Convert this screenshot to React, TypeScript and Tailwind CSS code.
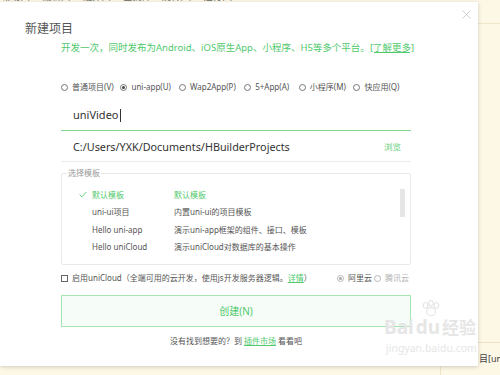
import React from "react";

const FONT = { fontFamily: '"Noto Sans", "Noto Sans CJK SC", sans-serif' };

function Radio({ checked, light }: { checked?: boolean; light?: boolean }) {
  return (
    <span
      className={`flex h-[7px] w-[7px] shrink-0 items-center justify-center rounded-full border ${
        light ? "border-[#b8b8b8]" : "border-[#777]"
      } bg-white`}
    >
      {checked && <span className={`h-[3px] w-[3px] rounded-full ${light ? "bg-[#aaa]" : "bg-[#444]"}`} />}
    </span>
  );
}

const radios = [
  { label: "普通项目(V)", w: "w-[62px]" },
  { label: "uni-app(U)", w: "w-[61px]", checked: true },
  { label: "Wap2App(P)", w: "w-[68px]" },
  { label: "5+App(A)", w: "w-[57px]" },
  { label: "小程序(M)", w: "w-[57px]" },
  { label: "快应用(Q)", w: "w-[60px]" },
];

const templates = [
  { name: "默认模板", desc: "默认模板", active: true },
  { name: "uni-ui项目", desc: "内置uni-ui的项目模板" },
  { name: "Hello uni-app", desc: "演示uni-app框架的组件、接口、模板" },
  { name: "Hello uniCloud", desc: "演示uniCloud对数据库的基本操作" },
];

export default function App() {
  return (
    <div className="relative h-[375px] w-[500px] overflow-hidden bg-[#fdf7e6]" style={FONT}>
      {/* underlying editor */}
      <div className="flex h-full w-full flex-col">
        <div className="h-[24px] border-b border-[#efe6cc]">
          <div className="mt-[-8px] flex gap-[12px] pl-[2px] text-[9px] leading-[10px] text-[#666]">
            <span>帮助(Y)</span>
            <span>编辑(E)</span>
            <span>选择(S)</span>
            <span>查找(I)</span>
            <span>跳转(G)</span>
            <span>运行(R)</span>
            <span className="ml-[50px]">HBuilder X 3.0.0</span>
          </div>
        </div>
        <div className="flex-1" />
        <div className="ml-auto flex h-[33px] w-[60px] border-l border-t border-[#eee3c6] bg-[#fdf7e6]">
          <span className="ml-[38px] mt-[10px] whitespace-nowrap text-[9px] leading-[12px] text-[#444]">目[uni</span>
        </div>
      </div>

      {/* dialog */}
      <div className="absolute left-0 top-[2px] h-[364px] w-[478px] bg-white shadow-[0_1px_4px_rgba(0,0,0,0.18)]">
        {/* close */}
        <svg className="absolute left-[462px] top-[8px]" width="9" height="9" viewBox="0 0 9 9">
          <path d="M0.5 0.5 L8.5 8.5 M8.5 0.5 L0.5 8.5" stroke="#c8c8c8" strokeWidth="0.9" />
        </svg>

        <div className="pt-[20px]">
          <div className="pl-[25px] text-[12px] leading-[14px] text-[#555]">新建项目</div>
          <div className="mt-[6px] pl-[61px] text-[9.5px] leading-[12px] text-[#4fc96c] whitespace-nowrap">
            开发一次，同时发布为Android、iOS原生App、小程序、H5等多个平台。
            <span className="underline">[了解更多]</span>
          </div>

          <div className="ml-[61px] w-[350px]">
            {/* radios */}
            <div className="mt-[27px] flex h-[12px] items-center text-[8px] text-[#555]">
              {radios.map((r) => (
                <div key={r.label} className={`flex items-center gap-[4px] ${r.w}`}>
                  <Radio checked={r.checked} />
                  <span className="whitespace-nowrap leading-[12px]">{r.label}</span>
                </div>
              ))}
            </div>

            {/* name input */}
            <div className="mt-[7px] flex h-[31px] items-center border-b border-[#7fd891] pl-[12px] text-[11px] text-[#333]">
              <span>uniVideo</span>
              <span className="ml-[1px] h-[13px] w-[1px] bg-[#333]" />
            </div>

            {/* path */}
            <div className="flex h-[31px] items-center border-b border-[#ececec] pl-[12px] pr-[10px] pt-[2px]">
              <span className="text-[10.8px] text-[#333]">C:/Users/YXK/Documents/HBuilderProjects</span>
              <span className="ml-auto text-[8.5px] text-[#5fcf78]">浏览</span>
            </div>

            {/* templates */}
            <fieldset className="relative mt-[6px] h-[97px] rounded-[2px] border border-[#e9e9e9] px-0 pb-0">
              <legend className="ml-[5px] px-[1px] text-[8px] leading-[10px] text-[#9a9a9a]">选择模板</legend>
              <div className="pt-[8px]">
                {templates.map((t) => (
                  <div
                    key={t.name}
                    className={`flex h-[17.5px] items-center text-[8px] ${t.active ? "text-[#4fc96c]" : "text-[#555]"}`}
                  >
                    <span className="w-[30px] pl-[17px]">
                      {t.active && (
                        <svg width="8" height="7" viewBox="0 0 8 7">
                          <path d="M0.6 3.6 L2.9 5.8 L7.4 0.9" fill="none" stroke="#4fc96c" strokeWidth="0.9" />
                        </svg>
                      )}
                    </span>
                    <span className="w-[82px] whitespace-nowrap">{t.name}</span>
                    <span className="whitespace-nowrap">{t.desc}</span>
                  </div>
                ))}
              </div>
              <div className="absolute left-[338px] top-[11px] h-[28px] w-[5px] bg-[#e6e6e6]" />
            </fieldset>

            {/* uniCloud */}
            <div className="mt-[7px] flex h-[12px] items-center text-[8px] text-[#555]">
              <span className="h-[7px] w-[7px] border border-[#666] bg-white" />
              <span className="ml-[4px] whitespace-nowrap">
                启用uniCloud（全端可用的云开发，使用js开发服务器逻辑。
                <span className="text-[#4fc96c] underline">详情</span>）
              </span>
              <div className="ml-auto mr-[2px] flex items-center">
                <Radio checked light />
                <span className="ml-[4px] text-[#555]">阿里云</span>
                <span className="ml-[2px]">
                  <Radio light />
                </span>
                <span className="ml-[4px] text-[#b5b5b5]">腾讯云</span>
              </div>
            </div>

            {/* create button */}
            <div className="mt-[11px] flex h-[32px] items-center justify-center border border-[#a7e4b3] bg-[#f6fcf7] text-[10px] text-[#4fc96c]">
              创建(N)
            </div>

            {/* bottom */}
            <div className="mt-[9px] flex h-[10px] items-center justify-center text-[8px] text-[#555]">
              <span>没有找到想要的？到 </span>
              <span className="mx-[2px] text-[#4fc96c] underline">插件市场</span>
              <span>看看吧</span>
            </div>
          </div>
        </div>
      </div>

      {/* watermark */}
      <div className="pointer-events-none absolute left-[384px] top-[300px] flex flex-col items-start text-[#e6e6e6]">
        <svg className="ml-[36px]" width="22" height="18" viewBox="0 0 24 20">
          <g fill="none" stroke="#e4e4e4" strokeWidth="1.2">
            <ellipse cx="6" cy="6" rx="2.5" ry="3.2" />
            <ellipse cx="12" cy="3.5" rx="2.5" ry="3" />
            <ellipse cx="18" cy="6" rx="2.5" ry="3.2" />
            <ellipse cx="12" cy="13" rx="5" ry="4.5" />
          </g>
        </svg>
        <div className="-mt-[2px] flex items-baseline gap-[2px] text-[19px] font-bold leading-[22px]">
          <span>Bai</span>
          <span>du</span>
          <span className="text-[17px]" style={{ fontFamily: '"Noto Sans CJK SC", sans-serif' }}>经验</span>
        </div>
        <div className="mt-[4px] pl-[2px] text-[10.5px] leading-[12px]">jingyan.baidu.com</div>
      </div>
    </div>
  );
}
